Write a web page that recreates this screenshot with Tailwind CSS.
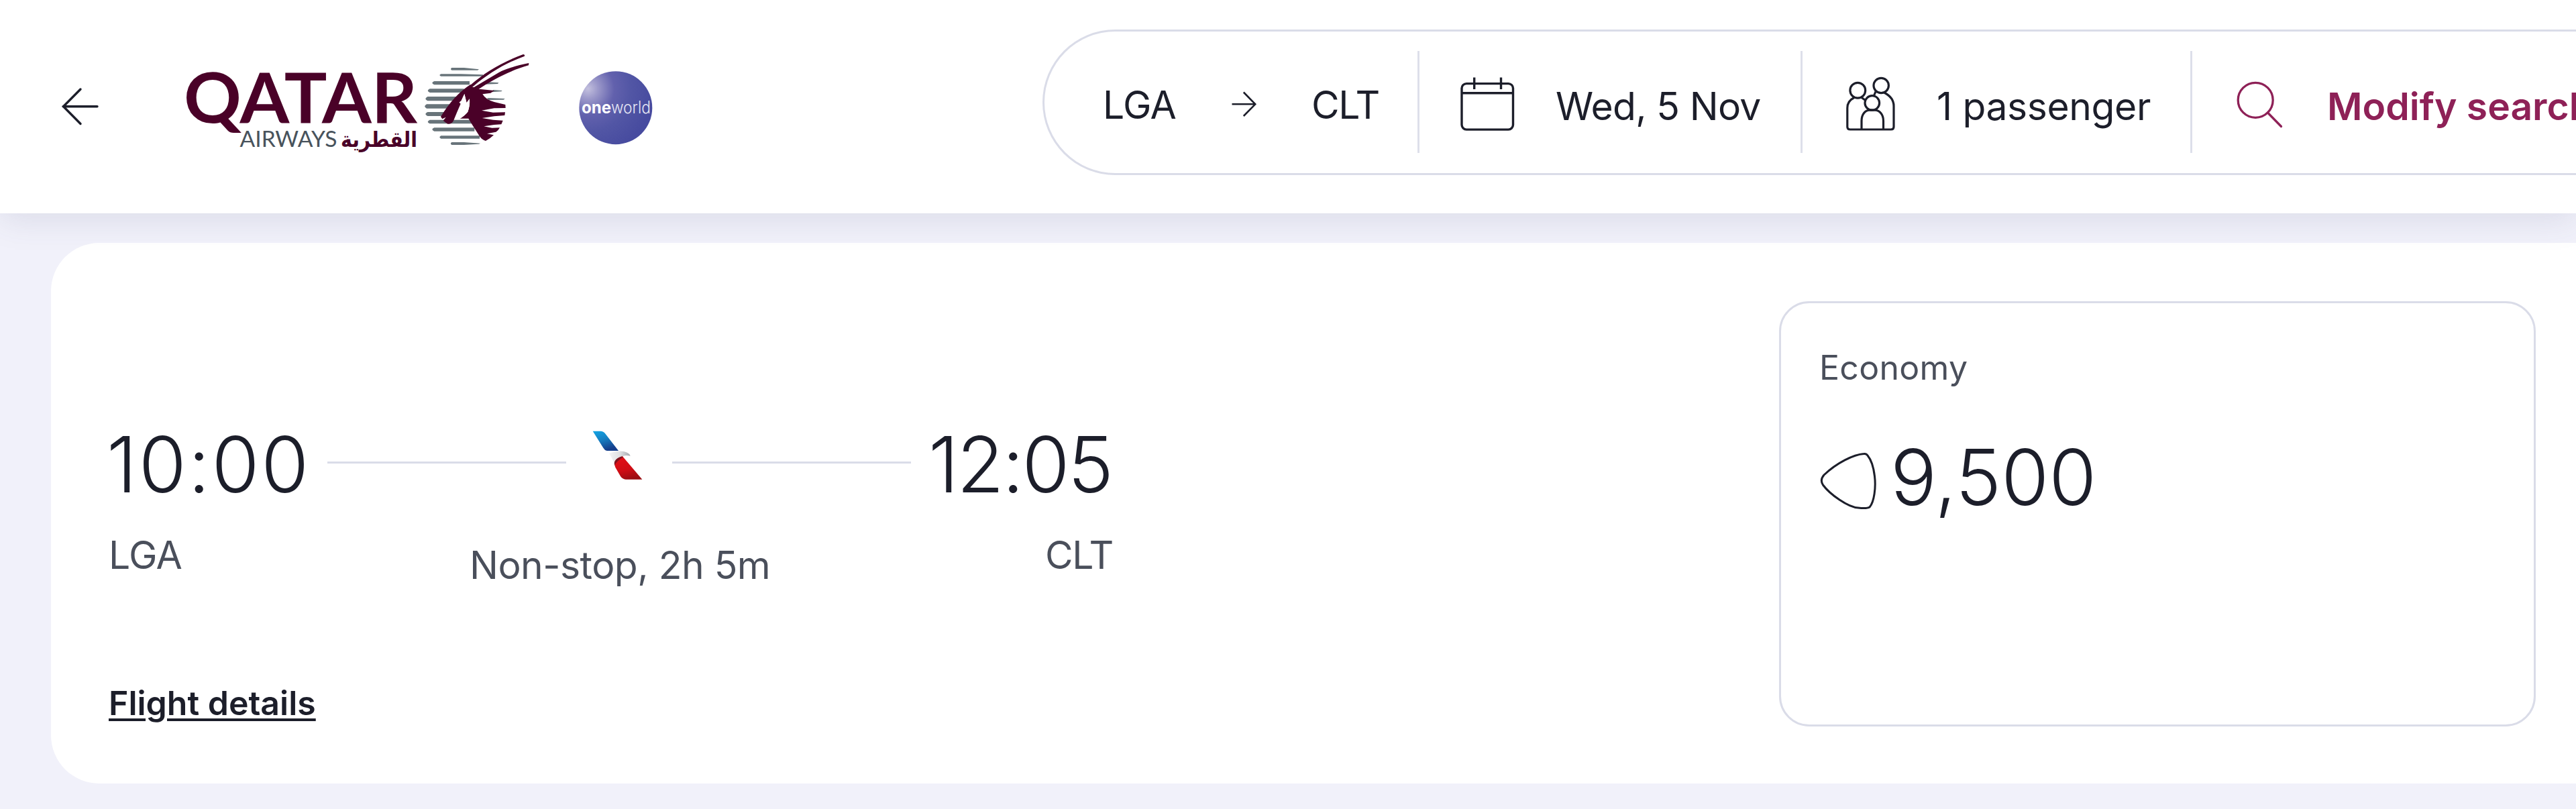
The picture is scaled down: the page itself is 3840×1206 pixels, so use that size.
<!doctype html>
<html lang="en">
<head>
<meta charset="utf-8">
<title>Flight results</title>
<script src="https://cdn.jsdelivr.net/npm/@tailwindcss/browser@4"></script>
</head>
<body class="h-[1206px] w-[3840px] overflow-hidden bg-[#f1f1fa] font-[Inter,sans-serif] text-[#1c1e2a]">

<header class="relative z-10 flex h-[318px] w-full items-start bg-white shadow-[0_8px_48px_rgba(60,72,110,0.13)]">
  <svg class="mt-[128px] ml-[90px] h-[62px] w-[60px] shrink-0" viewBox="90 128 60 62" fill="none" stroke="#1c1e2a" stroke-width="3.4" stroke-linecap="round">
    <path d="M94 158.7H145M120 133L94.500 158.700L120 184.500"/>
  </svg>

  <!-- Airline logo -->
  <svg class="mt-[70px] ml-[120px] h-[160px] w-[530px] shrink-0" viewBox="270 70 530 160">
    <text x="274" y="182.700" textLength="348" lengthAdjust="spacingAndGlyphs" font-family="Lato, sans-serif" font-weight="700" font-size="103" fill="#4a0128">QATAR</text>
    <text x="357.500" y="219.300" textLength="145" lengthAdjust="spacingAndGlyphs" font-family="Lato, sans-serif" font-size="33.500" fill="#48535c">AIRWAYS</text>
    <text x="508" y="219" textLength="114" lengthAdjust="spacingAndGlyphs" font-family="DejaVu Sans, sans-serif" font-weight="700" font-size="32" fill="#4a0128">القطرية</text>
    <g transform="translate(620 70) scale(.33333)">
      <g fill="#68747a">
        <path d="M160 93H215L282 100L276 104H160Q152 99 160 93Z"/>
        <path d="M112 121H200L300 124V131H112Q100 127 112 121Z"/>
        <path d="M82 153H240V169H82Q64 161 82 153Z"/>
        <path d="M62 187H215V204H62Q44 196 62 187Z"/>
        <path d="M52 222H195V241H52Q34 232 52 222Z"/>
        <path d="M48 256H175V275H48Q31 266 48 256Z"/>
        <path d="M52 291H150V309H52Q34 300 52 291Z"/>
        <path d="M62 326H250V343H62Q44 335 62 326Z"/>
        <path d="M82 361H262V377H82Q64 369 82 361Z"/>
        <path d="M112 397H285V410H112Q100 404 112 397Z"/>
        <path d="M160 426H215L288 431L282 434L215 438H160Q151 432 160 426Z"/>
        <path d="M320 157L370 160L366 165L310 167Z"/>
        <path d="M345 192L386 195L382 199L340 202Z"/>
        <path d="M318 228L398 231L392 236L326 237Z"/>
      </g>
      <path d="M480 33Q488 34 486 41C400 72 325 118 256 176L280 189C340 148 420 106 504 82L505 72C400 92 330 128 256 176L244 170C310 112 390 66 480 33Z" fill="#4a0128"/>
      <path d="M244 168L282 188L350 195L334 206L298 211Q312 236 350 246L400 258L401 273L350 274L294 284L345 293L399 292L397 306L350 310L296 318L345 326L389 329L382 346L350 348L304 355L340 362L375 361Q368 375 358 380L318 388L348 394Q332 410 312 420Q296 416 285 400L250 345L235 320H195Q220 306 232 290Q242 265 240 232L226 250L217 210L203 240L194 248L200 254Q184 290 168 330Q160 346 142 344L122 330L134 314L118 322L111 312Q170 215 244 168Z" fill="#4a0128"/>
      <path d="M217 210L203 240L194 248L203 254Q188 290 174 324L197 321Q220 306 232 290Q242 265 240 232L227 250Z" fill="#fff"/>
      <path d="M252 179Q320 130 400 97Q335 136 260 180Z" fill="#fff"/>
    </g>
  </svg>

  <!-- Alliance badge -->
  <svg class="mt-[105px] ml-[62px] h-[112px] w-[112px] shrink-0" viewBox="862.500 105 112 112">
    <defs>
      <radialGradient id="globe" cx=".12" cy=".24" r=".9">
        <stop offset="0" stop-color="#c3c0de"/><stop offset=".16" stop-color="#9a97c9"/><stop offset=".4" stop-color="#6261ad"/><stop offset=".65" stop-color="#5256a5"/><stop offset="1" stop-color="#474b9f"/>
      </radialGradient>
    </defs>
    <circle cx="918.300" cy="160.700" r="54.500" fill="url(#globe)"/>
    <text x="867.500" y="168.700" textLength="44" lengthAdjust="spacingAndGlyphs" font-family="Inter, sans-serif" font-weight="700" font-size="25" fill="#fff">one</text>
    <text x="911.500" y="168.700" textLength="59" lengthAdjust="spacingAndGlyphs" font-family="Inter, sans-serif" font-weight="300" font-size="25" fill="#e6e6f4">world</text>
  </svg>

  <!-- Search summary -->
  <div class="mt-[44px] ml-[580px] flex h-[217px] w-[2286px] shrink-0 items-start overflow-hidden rounded-l-[109px] border-y-[3px] border-l-[3px] border-[#dadce8] text-[57px] leading-[60px] whitespace-nowrap">
    <span class="mt-[80px] ml-[87px] w-[110px] shrink-0 tracking-[-0.7px]">LGA</span>
    <svg class="mt-[87px] ml-[80px] h-[42px] w-[42px] shrink-0" viewBox="1834 134 42 42" fill="none" stroke="#1c1e2a" stroke-width="2.600">
      <path d="M1836.500 155.300H1871M1853.800 137.500L1871.200 155.300L1853.800 173"/>
    </svg>
    <span class="mt-[80px] ml-[79px] w-[103px] shrink-0 tracking-[-1.5px]">CLT</span>
    <i class="mt-[29px] ml-[55px] h-[152px] w-[3px] shrink-0 bg-[#dddfea]"></i>
    <svg class="mt-[65px] ml-[60px] h-[86px] w-[84px] shrink-0" viewBox="2176 112 84 86" fill="none" stroke="#1c1e2a" stroke-width="3.400">
      <rect x="2179" y="124.600" width="76.500" height="68.500" rx="7"/>
      <path d="M2179 138.700H2255.500M2197.700 115.500V133M2237.500 115.500V133"/>
    </svg>
    <span class="mt-[82px] ml-[59px] w-[310px] shrink-0 tracking-[-0.7px]">Wed, 5 Nov</span>
    <i class="mt-[29px] ml-[55px] h-[152px] w-[3px] shrink-0 bg-[#dddfea]"></i>
    <svg class="mt-[65px] ml-[63px] h-[86px] w-[76px] shrink-0" viewBox="2750 112 76 86" fill="none" stroke="#1c1e2a" stroke-width="3.200" stroke-linejoin="round">
      <circle cx="2769.300" cy="134.800" r="11.400"/>
      <circle cx="2804.200" cy="127.500" r="11.200"/>
      <circle cx="2790.800" cy="153.400" r="10.800"/>
      <path d="M2764 145.500C2757 149 2753.800 155 2753.800 161V189Q2753.800 193 2758 193H2819Q2823 193 2823 189V158C2823 149 2816.500 142 2808.500 138M2775 145.500L2780 149M2796 136.500L2793.500 142.500M2775 193V180C2775 171 2780 164.500 2787 164.200H2795C2802 164.500 2807.500 171 2807.500 180V193"/>
    </svg>
    <span class="mt-[82px] ml-[61px] w-[320px] shrink-0 tracking-[-0.4px]">1 passenger</span>
    <i class="mt-[29px] ml-[58px] h-[152px] w-[3px] shrink-0 bg-[#dddfea]"></i>
    <svg class="mt-[71px] ml-[64px] h-[74px] w-[72px] shrink-0" viewBox="3332 118 72 74" fill="none" stroke="#8e2157" stroke-width="3.300" stroke-linecap="round">
      <circle cx="3362.200" cy="149.300" r="26"/>
      <path d="M3380.500 168L3400.500 188.500"/>
    </svg>
    <span class="mt-[82px] ml-[65px] shrink-0 font-semibold text-[#8e2157]">Modify search</span>
  </div>
</header>

<main class="mt-[44px] ml-[76px] flex h-[806px] w-[3764px] items-start rounded-l-[72px] bg-white whitespace-nowrap">
  <section class="w-[2576px] shrink-0 pt-[271px] pl-[86px]">
    <div class="-ml-[3px] flex h-[120px] items-start text-[115px] leading-[120px] font-light">
      <span class="w-[305px] shrink-0 tracking-[2.600px]">10:00</span>
      <i class="mt-[55px] ml-[24px] h-[3px] w-[356px] shrink-0 bg-[#dadce8]"></i>
      <svg class="-mt-[3px] ml-[26px] h-[100px] w-[120px] shrink-0" viewBox="0 0 360 300">
        <defs>
          <linearGradient id="tailBlue" x1="0" y1="0" x2=".4" y2="1"><stop offset="0" stop-color="#12a5e4"/><stop offset=".5" stop-color="#167fc2"/><stop offset="1" stop-color="#153f8c"/></linearGradient>
          <linearGradient id="tailRed" x1=".2" y1="0" x2=".5" y2="1"><stop offset="0" stop-color="#e30f17"/><stop offset=".6" stop-color="#cf0d14"/><stop offset="1" stop-color="#9b0d12"/></linearGradient>
          <linearGradient id="beak" x1="0" y1="0" x2="1" y2="0"><stop offset="0" stop-color="#f4f4f5"/><stop offset=".5" stop-color="#dfe1e3"/><stop offset="1" stop-color="#a4a8ad"/></linearGradient>
        </defs>
        <path d="M41 38H78Q90 39 98 51L156 126H104Q94 124 88 113Z" fill="url(#tailBlue)"/>
        <path d="M114 137Q150 124 180 129Q205 135 209 149Q190 144 176 150Q148 160 138 182Q128 160 114 137Z" fill="url(#beak)"/>
        <path d="M174 151L262 254H188Q174 253 165 240L142 200Q132 180 146 166Q156 155 174 151Z" fill="url(#tailRed)"/>
        <path d="M174 151Q150 155 140 172Q134 182 138 191Q148 172 176 155Z" fill="#7e1520"/>
      </svg>
      <i class="mt-[55px] ml-[12px] h-[3px] w-[356px] shrink-0 bg-[#dadce8]"></i>
      <span class="ml-[26px] shrink-0 tracking-[-2.900px]">12:05</span>
    </div>
    <div class="mt-[45px] flex h-[75px] items-start text-[57px] leading-[60px] text-[#4a4f5b]">
      <span class="w-[109px] shrink-0 tracking-[-0.7px]">LGA</span>
      <span class="mt-[15px] ml-[429px] w-[450px] shrink-0 tracking-[-0.5px]">Non-stop, 2h 5m</span>
      <span class="ml-[408px] shrink-0 tracking-[-1.5px]">CLT</span>
    </div>
    <a class="mt-[147px] block text-[50px] leading-[56px] font-semibold underline decoration-[4px] underline-offset-[5px]">Flight details</a>
  </section>

  <section class="mt-[87px] h-[634px] w-[1128px] shrink-0 rounded-[45px] border-[3px] border-[#dadce8] pt-[68px] pl-[57px]">
    <div class="text-[50px] leading-[56px] tracking-[0.3px] text-[#4a4f5b]">Economy</div>
    <div class="mt-[76px] flex items-start text-[115px] leading-[120px] font-light">
      <svg class="mt-[20px] h-[90px] w-[88px] shrink-0" viewBox="2712 672 88 90" fill="none" stroke="#1c1e2a" stroke-width="3">
        <path d="M2778.500 676.500C2763 677.500 2738 690 2719 708Q2712.500 715.500 2717.500 723C2728 737 2755 756.500 2770 757Q2783 758.500 2787 756C2794 748 2796.500 726 2794.500 710C2793 697 2789 685 2784 679Q2782 676 2778.500 676.500Z"/>
      </svg>
      <span class="ml-[18px]">9,500</span>
    </div>
  </section>
</main>
</body>
</html>
